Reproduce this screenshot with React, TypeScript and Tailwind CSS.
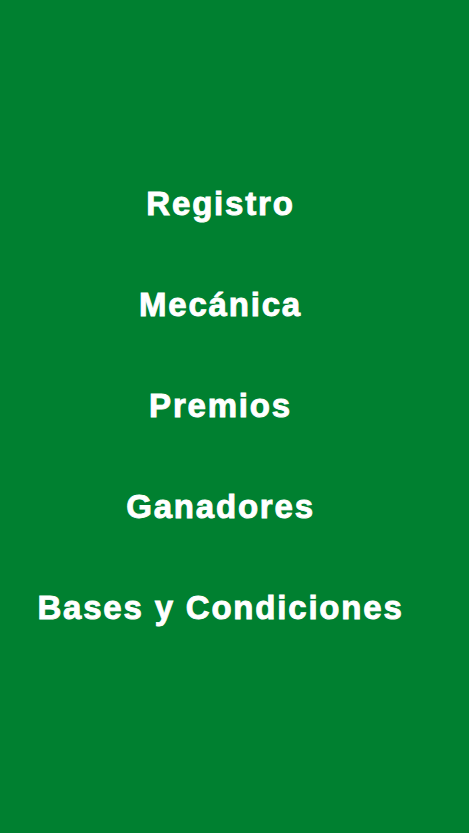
import React from 'react';

const items = ['Registro', 'Mecánica', 'Premios', 'Ganadores', 'Bases y Condiciones'];

const App = () => {
  return (
    <div className="min-h-[833px] w-full bg-[#008030] pt-[153px] pr-[28px]">
      <ul className="flex flex-col items-center font-['Liberation_Sans',Arial,sans-serif] text-[33px] font-bold leading-[101px] tracking-[1.8px] text-white [-webkit-text-stroke:0.9px_white]">
        {items.map((item) => (
          <li key={item}>{item}</li>
        ))}
      </ul>
    </div>
  );
};

export default App;
